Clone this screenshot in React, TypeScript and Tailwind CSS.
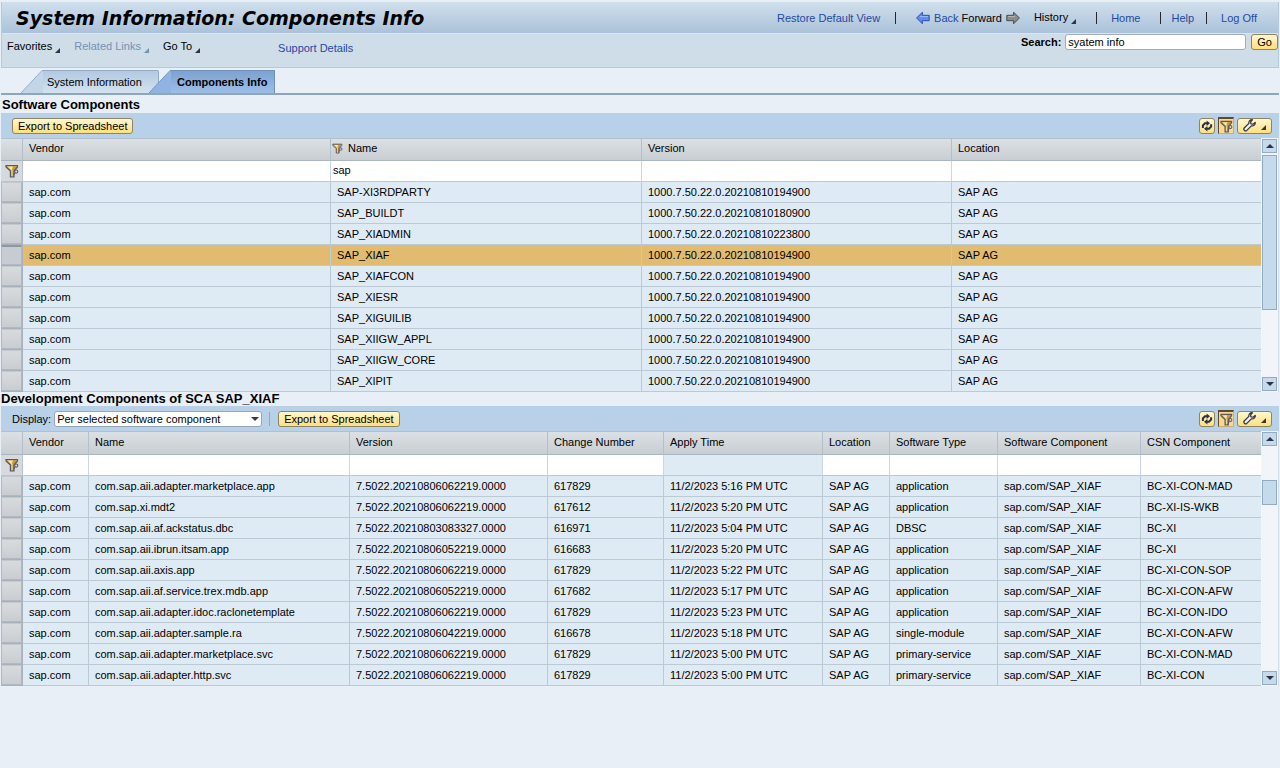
import { useState } from "react";
import type { ReactNode } from "react";

const SOFTWARE_COLUMNS = [
  { label: "Vendor", width: "w-[308px]" },
  { label: "Name", width: "w-[311px]", filter: "sap" },
  { label: "Version", width: "w-[310px]" },
  { label: "Location", width: "w-[309px]" },
];

const SOFTWARE_ROWS = [
  ["SAP-XI3RDPARTY", "1000.7.50.22.0.20210810194900"],
  ["SAP_BUILDT", "1000.7.50.22.0.20210810180900"],
  ["SAP_XIADMIN", "1000.7.50.22.0.20210810223800"],
  ["SAP_XIAF", "1000.7.50.22.0.20210810194900"],
  ["SAP_XIAFCON", "1000.7.50.22.0.20210810194900"],
  ["SAP_XIESR", "1000.7.50.22.0.20210810194900"],
  ["SAP_XIGUILIB", "1000.7.50.22.0.20210810194900"],
  ["SAP_XIIGW_APPL", "1000.7.50.22.0.20210810194900"],
  ["SAP_XIIGW_CORE", "1000.7.50.22.0.20210810194900"],
  ["SAP_XIPIT", "1000.7.50.22.0.20210810194900"],
].map(([name, version]) => ["sap.com", name, version, "SAP AG"]);

const DEVELOPMENT_COLUMNS = [
  { label: "Vendor", width: "w-[66px]" },
  { label: "Name", width: "w-[261px]" },
  { label: "Version", width: "w-[198px]" },
  { label: "Change Number", width: "w-[116px]" },
  { label: "Apply Time", width: "w-[159px]", locked: true },
  { label: "Location", width: "w-[67px]" },
  { label: "Software Type", width: "w-[108px]" },
  { label: "Software Component", width: "w-[143px]" },
  { label: "CSN Component", width: "w-[120px]" },
];

const DEVELOPMENT_ROWS = [
  ["com.sap.aii.adapter.marketplace.app", "7.5022.20210806062219.0000", "617829", "5:16", "application", "BC-XI-CON-MAD"],
  ["com.sap.xi.mdt2", "7.5022.20210806062219.0000", "617612", "5:20", "application", "BC-XI-IS-WKB"],
  ["com.sap.aii.af.ackstatus.dbc", "7.5022.20210803083327.0000", "616971", "5:04", "DBSC", "BC-XI"],
  ["com.sap.aii.ibrun.itsam.app", "7.5022.20210806052219.0000", "616683", "5:20", "application", "BC-XI"],
  ["com.sap.aii.axis.app", "7.5022.20210806062219.0000", "617829", "5:22", "application", "BC-XI-CON-SOP"],
  ["com.sap.aii.af.service.trex.mdb.app", "7.5022.20210806052219.0000", "617682", "5:17", "application", "BC-XI-CON-AFW"],
  ["com.sap.aii.adapter.idoc.raclonetemplate", "7.5022.20210806062219.0000", "617829", "5:23", "application", "BC-XI-CON-IDO"],
  ["com.sap.aii.adapter.sample.ra", "7.5022.20210806042219.0000", "616678", "5:18", "single-module", "BC-XI-CON-AFW"],
  ["com.sap.aii.adapter.marketplace.svc", "7.5022.20210806062219.0000", "617829", "5:00", "primary-service", "BC-XI-CON-MAD"],
  ["com.sap.aii.adapter.http.svc", "7.5022.20210806062219.0000", "617829", "5:00", "primary-service", "BC-XI-CON"],
].map(([name, version, change, time, type, csn]) => [
  "sap.com",
  name,
  version,
  change,
  `11/2/2023 ${time} PM UTC`,
  "SAP AG",
  type,
  "sap.com/SAP_XIAF",
  csn,
]);

type Column = { label: string; width: string; filter?: string; locked?: boolean };

function Corner({ className = "text-[#2f3346]" }: { className?: string }) {
  return (
    <svg className={`h-[5px] w-[5px] ${className}`} viewBox="0 0 5 5" aria-hidden="true">
      <path d="M5 0V5H0Z" fill="currentColor" />
    </svg>
  );
}

function FunnelIcon({ className = "h-3.5 w-3.5" }: { className?: string }) {
  return (
    <svg className={className} viewBox="0 0 14 14" aria-hidden="true">
      <path d="M1 1.5H12.5V3L9 7V12.8H5.4V7L1 3Z" fill="#c39a3c" stroke="#5a5866" strokeWidth="1.2" />
      <path d="M2.4 2.4H8L6.6 6.4Z" fill="#f7e6ab" />
      <path d="M7 6V12.2" stroke="#f0d67f" strokeWidth="1.2" />
      <circle cx="11.2" cy="7.6" r="1.6" fill="#d8dade" stroke="#5a5866" strokeWidth="1.1" />
      <path d="M10 9L8.6 11" stroke="#5a5866" strokeWidth="1.2" />
    </svg>
  );
}

function RefreshIcon() {
  return (
    <svg className="h-3 w-3" viewBox="0 0 12 12" aria-hidden="true">
      <path d="M1.9 8V5.4L4 3.2H6" fill="none" stroke="#2c3048" strokeWidth="2" />
      <path d="M5.6 .4L9 3.2L5.6 6Z" fill="#2c3048" />
      <path d="M10.1 4.2V6.6L8 8.8H6" fill="none" stroke="#2c3048" strokeWidth="2" />
      <path d="M6.4 6L3 8.8L6.4 11.6Z" fill="#2c3048" />
    </svg>
  );
}

function WrenchIcon() {
  return (
    <svg className="h-[13px] w-[13px]" viewBox="0 0 13 13" aria-hidden="true">
      <path
        d="M9.4 .8C7.2 .5 5.5 2.1 5.9 4.4L1.2 9C.1 10.4 2 12.8 3.8 11.4L8.4 6.9C10.8 7.3 12.6 5.6 12.2 3.4L10 5.2L8 4.8L7.6 2.9Z"
        fill="#f4f2e8"
        stroke="#33374c"
        strokeWidth="1.3"
        strokeLinejoin="round"
      />
    </svg>
  );
}

function ArrowIcon({ forward = false }: { forward?: boolean }) {
  return (
    <svg className="h-3.5 w-3.5" viewBox="0 0 14 14" aria-hidden="true">
      {forward ? (
        <path d="M13.4 7L7.6 1.2V4.3H.8V9.7H7.6V12.8Z" fill="#8c8c8c" stroke="#4c4c4c" strokeLinejoin="round" />
      ) : (
        <path d="M.6 7L6.4 1.2V4.3H13.2V9.7H6.4V12.8Z" fill="#5f8cf0" stroke="#2f50a8" strokeLinejoin="round" />
      )}
      {forward ? <path d="M2 5.6H9" stroke="#b8b8b8" /> : <path d="M4 5.6H12" stroke="#9dbcfb" />}
    </svg>
  );
}

function YellowButton({ children }: { children: ReactNode }) {
  return (
    <button className="h-4 rounded-[3px] border border-[#8d8561] bg-linear-to-b from-[#fff7cf] to-[#fddf7c] px-[5px] leading-[14px] whitespace-nowrap">
      {children}
    </button>
  );
}

function Tools() {
  return (
    <div className="ml-auto flex items-center gap-[3px]">
      <button
        aria-label="Refresh"
        className="flex h-4 w-4 items-center justify-center rounded-[3px] border border-[#8d8561] bg-linear-to-b from-[#fff7cf] to-[#fddf7c]"
      >
        <RefreshIcon />
      </button>
      <button
        aria-label="Filter"
        aria-pressed="true"
        className="flex h-[17px] w-4 items-center justify-center border border-t-2 border-[#5d4a26] border-r-[#c9b06c] border-b-[#c9b06c] bg-[#fbd98c]"
      >
        <FunnelIcon className="h-[13px] w-[13px]" />
      </button>
      <button
        aria-label="Settings"
        className="flex h-4 w-[35px] items-center justify-between rounded-[3px] border border-[#8d8561] bg-linear-to-b from-[#fff7cf] to-[#fddf7c] pr-[5px] pl-[5px]"
      >
        <WrenchIcon />
        <Corner className="mt-1 text-[#3c3524]" />
      </button>
    </div>
  );
}

function ScrollArrow({ down = false }: { down?: boolean }) {
  return (
    <button
      aria-label={down ? "Scroll down" : "Scroll up"}
      className="flex h-3.5 w-[15px] items-center justify-center border border-[#93abc0] bg-[#c5daea]"
    >
      <svg className="h-1 w-2" viewBox="0 0 8 4" aria-hidden="true">
        <path d={down ? "M0 0H8L4 4Z" : "M0 4H8L4 0Z"} fill="#2b3147" />
      </svg>
    </button>
  );
}

function DataGrid({
  title,
  columns,
  rows,
  selected,
  headHeight,
  thumb,
}: {
  title: string;
  columns: Column[];
  rows: string[][];
  selected?: number;
  headHeight: string;
  thumb: ReactNode;
}) {
  const [current, setCurrent] = useState(selected);
  return (
    <div className="flex pl-px">
      <table aria-label={title} className="min-w-0 flex-1 table-fixed border-separate border-spacing-0">
        <colgroup>
          <col className="w-[22px]" />
          {columns.map((c) => (
            <col key={c.label} className={c.width} />
          ))}
        </colgroup>
        <thead>
          <tr className={`${headHeight} bg-linear-to-b from-[#dce1e5] to-[#c8cdd1]`}>
            <td className="border-t border-r border-b border-[#b3bfcb] border-b-[#a9b5c1]" />
            {columns.map((c) => (
              <th
                key={c.label}
                scope="col"
                className="border-t border-r border-b border-[#b3bfcb] border-b-[#a9b5c1] p-0 pb-[3px] text-left font-normal whitespace-nowrap last:border-r-0"
              >
                <span className={`flex items-center gap-[5px] ${c.filter ? "pl-px" : "pl-1.5"}`}>
                  {c.filter && <FunnelIcon className="h-[11px] w-[11px]" />}
                  {c.label}
                </span>
              </th>
            ))}
          </tr>
          <tr className="h-[21px]">
            <td className="border-r border-b border-[#b9c4d2] bg-[#d6dade] p-0 pl-1">
              <FunnelIcon />
            </td>
            {columns.map((c) => (
              <td
                key={c.label}
                className={`border-r border-b border-[#ccd5e1] border-b-[#b9c9d7] p-0 last:border-r-0 ${c.locked ? "bg-[#deebf5]" : "bg-white"}`}
              >
                {!c.locked && (
                  <input
                    aria-label={`Filter ${c.label}`}
                    defaultValue={c.filter ?? ""}
                    className="block h-5 w-full bg-transparent pb-0.5 pl-0.5 outline-none"
                  />
                )}
              </td>
            ))}
          </tr>
        </thead>
        <tbody>
          {rows.map((row, i) => (
            <tr key={row[1]} className={`h-[21px] ${i === current ? "bg-[#e1bb70]" : "bg-[#deebf5]"}`}>
              <td className="border-r border-b border-[#a9b1ba] bg-[#cfd4d9] p-0">
                <button
                  aria-label={`Select row ${i + 1}`}
                  onClick={() => setCurrent(i)}
                  className={`block h-5 w-full border border-[#b2b8c0] ${i === current ? "border-t-2 border-t-[#8f98a2] bg-[#c6ccd1]" : "border-t-[#c2c8ce] bg-linear-to-b from-[#d8dbde] to-[#c9cdd1]"}`}
                />
              </td>
              {row.map((cell, j) => (
                <td
                  key={j}
                  className="border-r border-b border-[#bccad6] p-0 pl-1.5 leading-5 whitespace-nowrap last:border-r-0"
                >
                  {cell}
                </td>
              ))}
            </tr>
          ))}
        </tbody>
      </table>
      <div className="mr-px flex w-[18px] flex-col items-center gap-0.5 border-r border-[#d3dee8] bg-[#f1f5f9] py-px">
        <ScrollArrow />
        {thumb}
        <ScrollArrow down />
      </div>
    </div>
  );
}

function Divider() {
  return <span className="h-3 w-px bg-[#23282e]" />;
}

const LINK = "text-[#2249a3]";

export default function App() {
  return (
    <div className="min-h-screen bg-[#e8eff7] pt-0.5 font-['Liberation_Sans',Arial,sans-serif] text-[11px] leading-[14px] text-black">
      <header className="mx-px border-x border-b border-[#b7c9d8] bg-[#cfdde8]">
        <div className="flex h-8 items-center border-b border-[#d9e5ef] bg-linear-to-b from-[#d0dfec] to-[#abc2da] pr-[21px] pl-3.5">
          <h1 className="font-['Verdana','DejaVu_Sans',sans-serif] text-[19px] leading-6 font-bold whitespace-nowrap italic">
            System Information: Components Info
          </h1>
          <nav aria-label="Session" className="ml-auto flex items-center whitespace-nowrap">
            <a href="#restore" className={LINK}>Restore Default View</a>
            <span className="mr-5 ml-[15px] flex"><Divider /></span>
            <a href="#back" className={`flex items-center gap-1 ${LINK}`}>
              <ArrowIcon />
              Back
            </a>
            <a href="#forward" className="ml-[3px] flex items-center gap-1">
              Forward
              <ArrowIcon forward />
            </a>
            <button className="mb-0.5 ml-3.5 flex items-end gap-[3px]">
              History
              <Corner />
            </button>
            <span className="mr-3.5 ml-5 flex"><Divider /></span>
            <a href="#home" className={LINK}>Home</a>
            <span className="mr-2.5 ml-5 flex"><Divider /></span>
            <a href="#help" className={LINK}>Help</a>
            <span className="mr-3.5 ml-3 flex"><Divider /></span>
            <a href="#logoff" className={LINK}>Log Off</a>
          </nav>
        </div>
        <div className="flex h-[33px] items-start pl-[5px] whitespace-nowrap">
          <div className="flex gap-3.5 pt-[5px]">
            <button className="flex items-end gap-[3px]">Favorites<Corner /></button>
            <button className="flex items-end gap-[3px] text-[#7591b5]">
              Related Links<Corner className="text-[#7591b5]" />
            </button>
            <button className="flex items-end gap-[3px]">Go To<Corner /></button>
          </div>
          <a href="#support" className={`ml-[78px] pt-[7px] ${LINK}`}>Support Details</a>
          <form className="ml-auto flex items-center" onSubmit={(e) => e.preventDefault()}>
            <label htmlFor="search" className="mr-1 font-bold">Search:</label>
            <input
              id="search"
              defaultValue="syatem info"
              className="mr-[5px] h-4 w-[181px] rounded-[3px] border border-[#a0adb9] bg-white px-0.5 outline-none"
            />
            <YellowButton>Go</YellowButton>
          </form>
        </div>
      </header>

      <nav aria-label="Views" className="mx-px mt-0.5 flex h-[25px] items-stretch border-b-2 border-[#8ea6bc] pl-5">
        <a href="#system" className="flex">
          <svg className="h-[23px] w-[22px]" viewBox="0 0 22 23" aria-hidden="true">
            <path d="M0 23L21 1H22V23Z" fill="#c3d5e8" />
            <path d="M0 23L21 .5H22" fill="none" stroke="#92acc8" />
          </svg>
          <span className="flex w-[116px] items-center rounded-tr-[2px] border-t border-r border-[#92acc8] bg-linear-to-b from-[#b3c9e1] to-[#d3e2ef] pl-1">
            System Information
          </span>
        </a>
        <a href="#components" aria-current="page" className="-ml-2.5 flex font-bold">
          <svg className="h-[23px] w-[22px]" viewBox="0 0 22 23" aria-hidden="true">
            <path d="M0 23L21 1H22V23Z" fill="#90b4e1" />
            <path d="M0 23L21 .5H22" fill="none" stroke="#6f92bd" />
          </svg>
          <span className="flex w-[104px] items-center border-t border-r border-[#6f92bd] bg-linear-to-b from-[#7da2d1] to-[#9dbee8] pl-1.5">
            Components Info
          </span>
        </a>
      </nav>

      <main>
        <section>
          <h2 className="pt-0.5 pl-0.5 text-[13px] leading-4 font-bold">Software Components</h2>
          <div className="mx-px flex h-[25px] items-center bg-[#b9d1e8] pr-[7px] pl-[11px]">
            <YellowButton>Export to Spreadsheet</YellowButton>
            <Tools />
          </div>
          <DataGrid
            title="Software Components"
            columns={SOFTWARE_COLUMNS}
            rows={SOFTWARE_ROWS}
            selected={3}
            headHeight="h-[23px]"
            thumb={
              <div className="flex w-[15px] flex-1 flex-col">
                <div className="h-[155px] border border-[#93abc0] bg-[#c5daea]" />
              </div>
            }
          />
        </section>

        <section>
          <h2 className="pl-px text-[13px] leading-[14px] font-bold">Development Components of SCA SAP_XIAF</h2>
          <div className="mx-px flex h-[25px] items-center bg-[#b9d1e8] pr-[7px] pl-[11px]">
            <label htmlFor="display" className="mr-[3px]">Display:</label>
            <div className="relative flex">
              <select
                id="display"
                className="h-4 w-52 appearance-none rounded-[3px] border border-[#93a8bb] bg-white pl-0.5 leading-[14px] outline-none"
              >
                <option>Per selected software component</option>
                <option>All components</option>
              </select>
              <svg className="pointer-events-none absolute top-1.5 right-[3px] h-1 w-2" viewBox="0 0 8 4" aria-hidden="true">
                <path d="M0 0H8L4 4Z" fill="#33394d" />
              </svg>
            </div>
            <span className="mr-2 ml-[7px] h-3.5 w-px bg-[#8fa7bf]" />
            <YellowButton>Export to Spreadsheet</YellowButton>
            <Tools />
          </div>
          <DataGrid
            title="Development Components of SCA SAP_XIAF"
            columns={DEVELOPMENT_COLUMNS}
            rows={DEVELOPMENT_ROWS}
            headHeight="h-6"
            thumb={
              <div className="flex w-[15px] flex-1 flex-col pt-8">
                <div className="h-[25px] border border-[#93abc0] bg-[#c5daea]" />
              </div>
            }
          />
        </section>
      </main>
    </div>
  );
}
